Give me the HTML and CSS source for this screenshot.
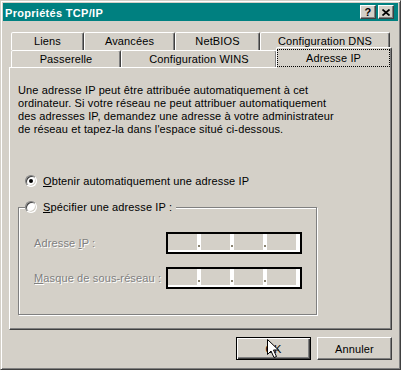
FILE: index.html
```html
<!DOCTYPE html>
<html lang="fr">
<head>
  <meta charset="UTF-8">
  <title>Propriétés TCP/IP</title>
  <link rel="stylesheet" href="styles.css">
</head>
<body>
  <div class="window">
    <div class="titlebar">
      <span class="title">Propriétés TCP/IP</span>
      <div class="caption-buttons">
        <span class="cap-btn help">?</span>
        <span class="cap-btn close">
          <svg width="8" height="7" viewBox="0 0 8 7"><path d="M0.5 0.5 L7.5 6.5 M7.5 0.5 L0.5 6.5" stroke="#000" stroke-width="1.7" fill="none"/></svg>
        </span>
      </div>
    </div>

    <div class="dialog-body">
      <div class="tab-row back">
        <div class="tab tab-liens">Liens</div>
        <div class="tab tab-avancees">Avancées</div>
        <div class="tab tab-netbios">NetBIOS</div>
        <div class="tab tab-dns">Configuration DNS</div>
      </div>
      <div class="tab-row front">
        <div class="tab tab-passerelle">Passerelle</div>
        <div class="tab tab-wins">Configuration WINS</div>
        <div class="tab active"><div class="focus">Adresse IP</div></div>
      </div>

      <div class="panel">
        <p class="intro">
          Une adresse IP peut être attribuée automatiquement à cet<br>
          ordinateur. Si votre réseau ne peut attribuer automatiquement<br>
          des adresses IP, demandez une adresse à votre administrateur<br>
          de réseau et tapez-la dans l'espace situé ci-dessous.
        </p>

        <div class="option first">
          <span class="radio checked"></span>
          <span><u>O</u>btenir automatiquement une adresse IP</span>
        </div>

        <div class="group">
          <div class="option legend">
            <span class="radio"></span>
            <span><u>S</u>pécifier une adresse IP :</span>
          </div>

          <div class="ip-row">
            <span class="ip-label">Adresse <u>I</u>P :</span>
            <div class="ip-box">
              <span class="octet"></span><span class="sep"></span>
              <span class="octet"></span><span class="sep"></span>
              <span class="octet"></span><span class="sep"></span>
              <span class="octet"></span>
            </div>
          </div>

          <div class="ip-row second">
            <span class="ip-label"><u>M</u>asque de sous-réseau :</span>
            <div class="ip-box">
              <span class="octet"></span><span class="sep"></span>
              <span class="octet"></span><span class="sep"></span>
              <span class="octet"></span><span class="sep"></span>
              <span class="octet"></span>
            </div>
          </div>
        </div>
      </div>

      <div class="button-row">
        <button class="btn default">OK</button>
        <button class="btn">Annuler</button>
      </div>
    </div>

    <!-- pointeur de la souris -->
    <svg class="cursor" width="13" height="20" viewBox="0 0 13 20">
      <path d="M0.5 0.5 L0.5 15.5 L4 12 L7 18.5 L9.5 17.5 L6.5 11 L11.5 11 Z" fill="#fff" stroke="#000" stroke-width="1" stroke-linejoin="miter"/>
    </svg>
  </div>
</body>
</html>
```

FILE: styles.css
```css
* {
  box-sizing: border-box;
}

body {
  margin: 0;
  background-color: #d4d0c8;
  font-family: "Liberation Sans", Arial, sans-serif;
  font-size: 11px;
  letter-spacing: 0.13px;
  color: #000;
}

.window {
  position: relative;
  width: 401px;
  height: 370px;
  padding: 2px;
  border: 1px solid;
  border-color: #d4d0c8 #404040 #404040 #d4d0c8;
  box-shadow: inset 1px 1px 0 #fff, inset -1px -1px 0 #808080;
  background-color: #d4d0c8;
}

/* barre de titre */
.titlebar {
  display: flex;
  justify-content: space-between;
  align-items: flex-start;
  height: 18px;
  padding: 2px 4px 0 2px;
  background-color: #008080;
}

.title {
  margin-top: 1px;
  line-height: 14px;
  font-weight: bold;
  letter-spacing: 0.3px;
  color: #fff;
}

.caption-buttons {
  display: flex;
  gap: 2px;
}

.cap-btn {
  display: flex;
  align-items: center;
  justify-content: center;
  width: 16px;
  height: 14px;
  border: 1px solid;
  border-color: #fff #404040 #404040 #fff;
  box-shadow: inset -1px -1px 0 #808080;
  background-color: #d4d0c8;
  font-weight: bold;
  font-size: 11px;
  line-height: 12px;
}

.dialog-body {
  padding: 11px 6px 0;
}

/* onglets */
.tab-row {
  display: flex;
  align-items: flex-end;
  margin-left: 2px;
}

.tab-row.back {
  height: 18px;
}

.tab-row.front {
  height: 17px;
}

.tab {
  height: 100%;
  border: 1px solid;
  border-bottom: 0;
  border-color: #fff #404040 transparent #fff;
  border-radius: 2px 2px 0 0;
  box-shadow: inset -1px 0 0 #808080;
  background-color: #d4d0c8;
  line-height: 16px;
  text-align: center;
  white-space: nowrap;
}

.tab-liens { width: 73px; }
.tab-avancees { width: 91px; }
.tab-netbios { width: 85px; }
.tab-dns { width: 130px; }
.tab-passerelle { width: 110px; }
.tab-wins { width: 156px; }

.tab.active {
  position: relative;
  z-index: 1;
  width: 116px;
  height: 21px;
  margin: 0 0 -1px -1px;
  padding-right: 1px;
}

.focus {
  height: 18px;
  margin-top: 1px;
  border: 1px dotted #000;
  line-height: 16px;
}

/* panneau */
.panel {
  height: 263px;
  padding: 16px 8px 0;
  border: 1px solid;
  border-color: #fff #404040 #404040 #fff;
  box-shadow: inset -1px -1px 0 #808080;
}

.intro {
  margin: 0;
  line-height: 13px;
}

.option {
  display: flex;
  align-items: center;
  height: 13px;
}

.option.first {
  margin-top: 38px;
  padding-left: 7px;
}

.radio {
  position: relative;
  width: 12px;
  height: 12px;
  margin-right: 6px;
  border: 1px solid;
  border-color: #808080 #fff #fff #808080;
  border-radius: 50%;
  box-shadow: inset 1px 1px 0 #404040, inset -1px -1px 0 #d4d0c8;
  background-color: #fff;
  flex-shrink: 0;
}

.radio.checked::after {
  content: "";
  position: absolute;
  left: 3px;
  top: 3px;
  width: 4px;
  height: 4px;
  border-radius: 50%;
  background-color: #000;
}

/* cadre "Spécifier une adresse IP" */
.group {
  display: flex;
  flex-direction: column;
  width: 299px;
  height: 108px;
  margin-top: 20px;
  border: 1px solid #808080;
  box-shadow: inset 1px 1px 0 #fff, 1px 1px 0 #fff;
}

.option.legend {
  align-self: flex-start;
  margin: -8px 0 0 6px;
  padding-right: 4px;
  background-color: #d4d0c8;
}

.ip-row {
  display: flex;
  align-items: center;
  height: 22px;
  margin-top: 19px;
  padding-left: 15px;
}

.ip-row.second {
  margin-top: 13px;
}

.ip-label {
  width: 132px;
  color: #808080;
  text-shadow: 1px 1px 0 #fff;
}

.ip-box {
  display: flex;
  width: 136px;
  height: 22px;
  padding: 0 4px 2px 0;
  border: 2px solid #000;
  background-color: #fff;
}

.octet {
  width: 29px;
  background-color: #d4d0c8;
}

.sep {
  width: 4px;
}

.sep::after {
  content: "";
  display: block;
  width: 2px;
  height: 2px;
  margin: 11px 0 0 1px;
  background-color: #8a8370;
}

/* boutons */
.button-row {
  display: flex;
  justify-content: flex-end;
  gap: 6px;
  margin-top: 7px;
}

.btn {
  width: 75px;
  height: 23px;
  padding: 0;
  border: 1px solid;
  border-color: #fff #404040 #404040 #fff;
  box-shadow: inset -1px -1px 0 #808080;
  background-color: #d4d0c8;
  font-family: "Liberation Sans", Arial, sans-serif;
  font-size: 11px;
  letter-spacing: 0.13px;
  color: #000;
}

.btn.default {
  border-color: #000;
  box-shadow: inset 1px 1px 0 #fff, inset -1px -1px 0 #404040, inset -2px -2px 0 #808080;
}

.cursor {
  position: absolute;
  left: 266px;
  top: 338px;
}
```
